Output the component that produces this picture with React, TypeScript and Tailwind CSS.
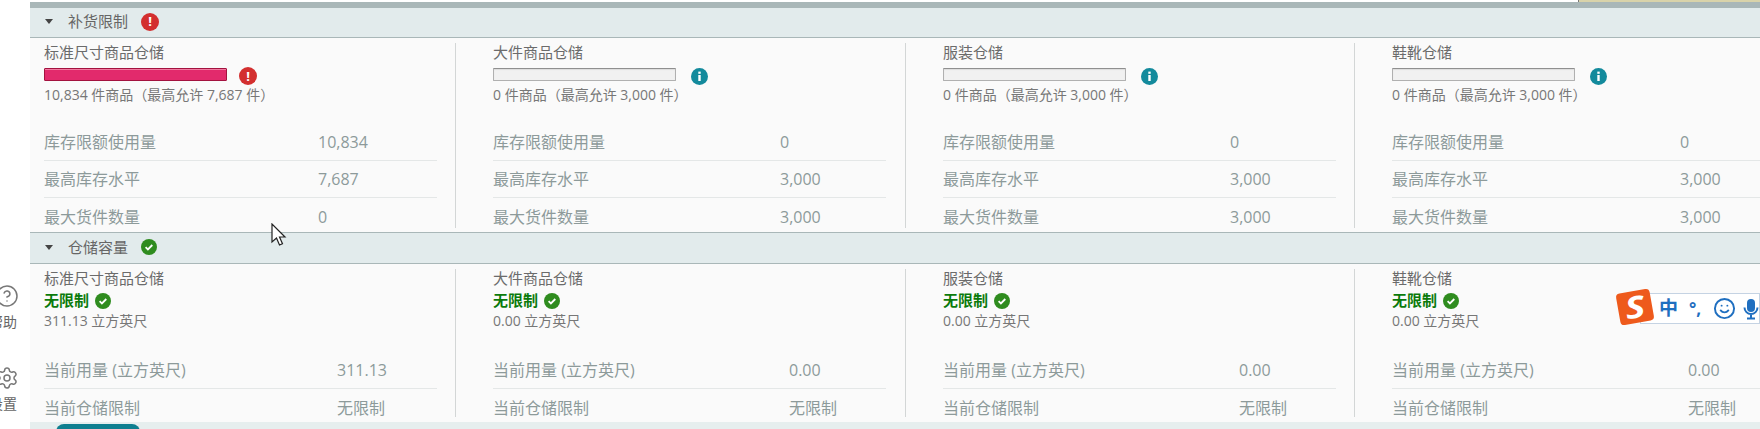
import { HelpCircle, Settings, Smile } from "lucide-react";

const ErrorIcon = ({ className = "" }: { className?: string }) => (
  <span className={`flex h-[18px] w-[18px] shrink-0 items-center justify-center rounded-full bg-[#d32f2f] text-[13px] font-bold leading-none text-white ${className}`}>
    !
  </span>
);

const InfoIcon = () => (
  <svg width="17" height="17" viewBox="0 0 17 17" className="ml-[15px] mt-[5px] shrink-0">
    <circle cx="8.5" cy="8.5" r="8.5" fill="#138a9c" />
    <rect x="7.3" y="3.6" width="2.4" height="2.2" fill="#fff" />
    <rect x="7.3" y="7" width="2.4" height="6" fill="#fff" />
  </svg>
);

const CheckIcon = () => (
  <svg width="16" height="16" viewBox="0 0 16 16" className="shrink-0">
    <circle cx="8" cy="8" r="8" fill="#2f8c1f" />
    <path d="M4.6 8.2l2.3 2.2 4.4-4.4" fill="none" stroke="#fff" strokeWidth="1.8" />
  </svg>
);

const Header = ({ title, icon, className }: { title: string; icon: React.ReactNode; className: string }) => (
  <div className={`flex shrink-0 items-center border-b border-[#a9b7b8] bg-[#e2ebec] pb-[2px] pl-[15px] text-[15px] text-[#666] ${className}`}>
    <span className="h-0 w-0 border-x-[4px] border-t-[5px] border-x-transparent border-t-[#444]" />
    <span className="ml-[15px] w-[73px]">{title}</span>
    {icon}
  </div>
);

const Row = ({ label, value, labelClass }: { label: string; value: string; labelClass: string }) => (
  <div className="flex h-[37px] shrink-0 items-center border-b border-[#e4e7e7] text-[16px] text-[#8d9a9a] last:border-b-0">
    <span className={labelClass}>{label}</span>
    <span>{value}</span>
  </div>
);

type Column = {
  title: string;
  status: React.ReactNode;
  sub: string;
  labelClass: string;
  rows: [string, string][];
};

const Col = ({ col, index, topClass }: { col: Column; index: number; topClass: string }) => (
  <div
    className={
      index === 0
        ? "flex h-full w-[425px] shrink-0 flex-col overflow-hidden pl-[14px]"
        : index === 2
          ? "flex h-full w-[449px] shrink-0 flex-col overflow-hidden border-l border-[#d3d6d6] pl-[37px]"
          : "flex h-full w-[450px] shrink-0 flex-col overflow-hidden border-l border-[#d3d6d6] pl-[37px]"
    }
  >
    <div className={topClass}>
      <div className="-mt-[1px] text-[15px] leading-[20px] text-[#6b6b6b]">{col.title}</div>
      {col.status}
      <div className="text-[14px] leading-[20px] text-[#777]">{col.sub}</div>
    </div>
    <div className="flex w-[393px] flex-col">
      {col.rows.map(([label, value]) => (
        <Row key={label} label={label} value={value} labelClass={col.labelClass} />
      ))}
    </div>
  </div>
);

const OverBar = () => (
  <div className="mt-[1px] flex h-[22px] items-start">
    <div className="mt-[5px] h-[13px] w-[183px] rounded-[1px] border border-[#a3123f] bg-[#e22a6c] shadow-[inset_0_1px_0_#f07aa0]" />
    <ErrorIcon className="ml-[12px] mt-[4px]" />
  </div>
);

const EmptyBar = () => (
  <div className="mt-[1px] flex h-[22px] items-start">
    <div className="mt-[5px] h-[13px] w-[183px] rounded-[1px] border border-[#b0b0b0] border-t-[#8f8f8f] bg-[#f1f1f1] shadow-[inset_0_1px_1px_#dcdcdc]" />
    <InfoIcon />
  </div>
);

const Unlimited = () => (
  <div className="mt-[2px] flex h-[21px] items-center gap-[6px] text-[15px] font-bold text-[#0b7a0b]">
    无限制
    <CheckIcon />
  </div>
);

const restockRows = (a: string, b: string, c: string): [string, string][] => [
  ["库存限额使用量", a],
  ["最高库存水平", b],
  ["最大货件数量", c],
];

const capacityRows = (a: string): [string, string][] => [
  ["当前用量 (立方英尺)", a],
  ["当前仓储限制", "无限制"],
];

const restock: Column[] = [
  { title: "标准尺寸商品仓储", status: <OverBar />, sub: "10,834 件商品（最高允许 7,687 件）", labelClass: "w-[274px]", rows: restockRows("10,834", "7,687", "0") },
  { title: "大件商品仓储", status: <EmptyBar />, sub: "0 件商品（最高允许 3,000 件）", labelClass: "w-[287px]", rows: restockRows("0", "3,000", "3,000") },
  { title: "服装仓储", status: <EmptyBar />, sub: "0 件商品（最高允许 3,000 件）", labelClass: "w-[287px]", rows: restockRows("0", "3,000", "3,000") },
  { title: "鞋靴仓储", status: <EmptyBar />, sub: "0 件商品（最高允许 3,000 件）", labelClass: "w-[288px]", rows: restockRows("0", "3,000", "3,000") },
];

const capacity: Column[] = [
  { title: "标准尺寸商品仓储", status: <Unlimited />, sub: "311.13 立方英尺", labelClass: "w-[293px]", rows: capacityRows("311.13") },
  { title: "大件商品仓储", status: <Unlimited />, sub: "0.00 立方英尺", labelClass: "w-[296px]", rows: capacityRows("0.00") },
  { title: "服装仓储", status: <Unlimited />, sub: "0.00 立方英尺", labelClass: "w-[296px]", rows: capacityRows("0.00") },
  { title: "鞋靴仓储", status: <Unlimited />, sub: "0.00 立方英尺", labelClass: "w-[296px]", rows: capacityRows("0.00") },
];

const SideItem = ({ icon, label, className }: { icon: React.ReactNode; label: string; className: string }) => (
  <div className={`flex flex-col items-end whitespace-nowrap text-[14px] leading-[20px] text-[#666] ${className}`}>
    {icon}
    <span className="pr-[2px]">{label}</span>
  </div>
);

export default function App() {
  return (
    <div className="relative flex h-[429px] w-[1760px] overflow-hidden bg-white font-['Open_Sans','Noto_Sans_CJK_SC',sans-serif]">
      {/* left nav, cut off by the screenshot */}
      <div className="flex w-[30px] shrink-0 flex-col items-end overflow-hidden pr-[11px] pt-[284px]">
        <SideItem className="" label="帮助" icon={<HelpCircle size={24} strokeWidth={1.5} className="mb-[4px] text-[#777]" />} />
        <SideItem className="mt-[34px]" label="设置" icon={<Settings size={24} strokeWidth={1.5} className="mb-[4px] text-[#777]" />} />
      </div>

      <div className="flex min-w-0 flex-1 flex-col">
        <div className="flex h-[2px] shrink-0 justify-end bg-white">
          <div className="w-[182px] border-l border-[#777] bg-[#d9d3aa]" />
        </div>
        <div className="h-[6px] shrink-0 bg-[#a9b7b8]" />

        <Header className="h-[30px]" title="补货限制" icon={<ErrorIcon />} />
        <div className="flex h-[195px] shrink-0 border-b border-[#a9b7b8] bg-[#fafafa] pb-[4px] pt-[5px]">
          {restock.map((col, i) => (
            <Col key={col.title} col={col} index={i} topClass="h-[81px] shrink-0" />
          ))}
        </div>

        <Header className="h-[31px]" title="仓储容量" icon={<CheckIcon />} />
        <div className="flex h-[158px] shrink-0 bg-[#fafafa] pb-[5px] pt-[5px]">
          {capacity.map((col, i) => (
            <Col key={col.title} col={col} index={i} topClass="h-[83px] shrink-0" />
          ))}
        </div>

        <div className="min-h-0 flex-1 overflow-hidden bg-[#e6eeee] pl-[26px] pt-[2px]">
          <div className="h-[8px] w-[84px] rounded-t-[8px] bg-[#0f7f90]" />
        </div>
      </div>

      {/* mouse pointer */}
      <svg width="16" height="24" viewBox="0 0 16 24" className="absolute left-[271px] top-[223px]">
        <path d="M1 1v18l4.5-4 3 7 3-1.3-3-6.7H14z" fill="#fff" stroke="#222" strokeWidth="1.2" />
      </svg>

      {/* IME toolbar */}
      <div className="absolute left-[1640px] top-[293px] flex h-[31px] w-[120px] items-center border border-[#c5d3e3] bg-white pl-[18px] text-[#1f6fc0]">
        <span className="w-[30px] text-[19px] font-bold leading-none">中</span>
        <span className="w-[24px] text-[17px] font-bold leading-none">°,</span>
        <Smile size={23} strokeWidth={2} />
        <svg width="16" height="22" viewBox="0 0 16 22" className="ml-[7px] shrink-0">
          <rect x="4" y="1" width="8" height="13" rx="4" fill="#1f6fc0" />
          <path d="M1.5 9.5a6.5 6.5 0 0 0 13 0M8 16v4M4 20.5h8" fill="none" stroke="#1f6fc0" strokeWidth="2" />
        </svg>
      </div>
      <div className="absolute left-[1618px] top-[291px] flex h-[32px] w-[34px] -rotate-[10deg] items-center justify-center rounded-[4px] bg-[#ee5a1c] text-[30px] font-bold italic leading-none text-white">
        <span className="scale-x-125">S</span>
      </div>
    </div>
  );
}
